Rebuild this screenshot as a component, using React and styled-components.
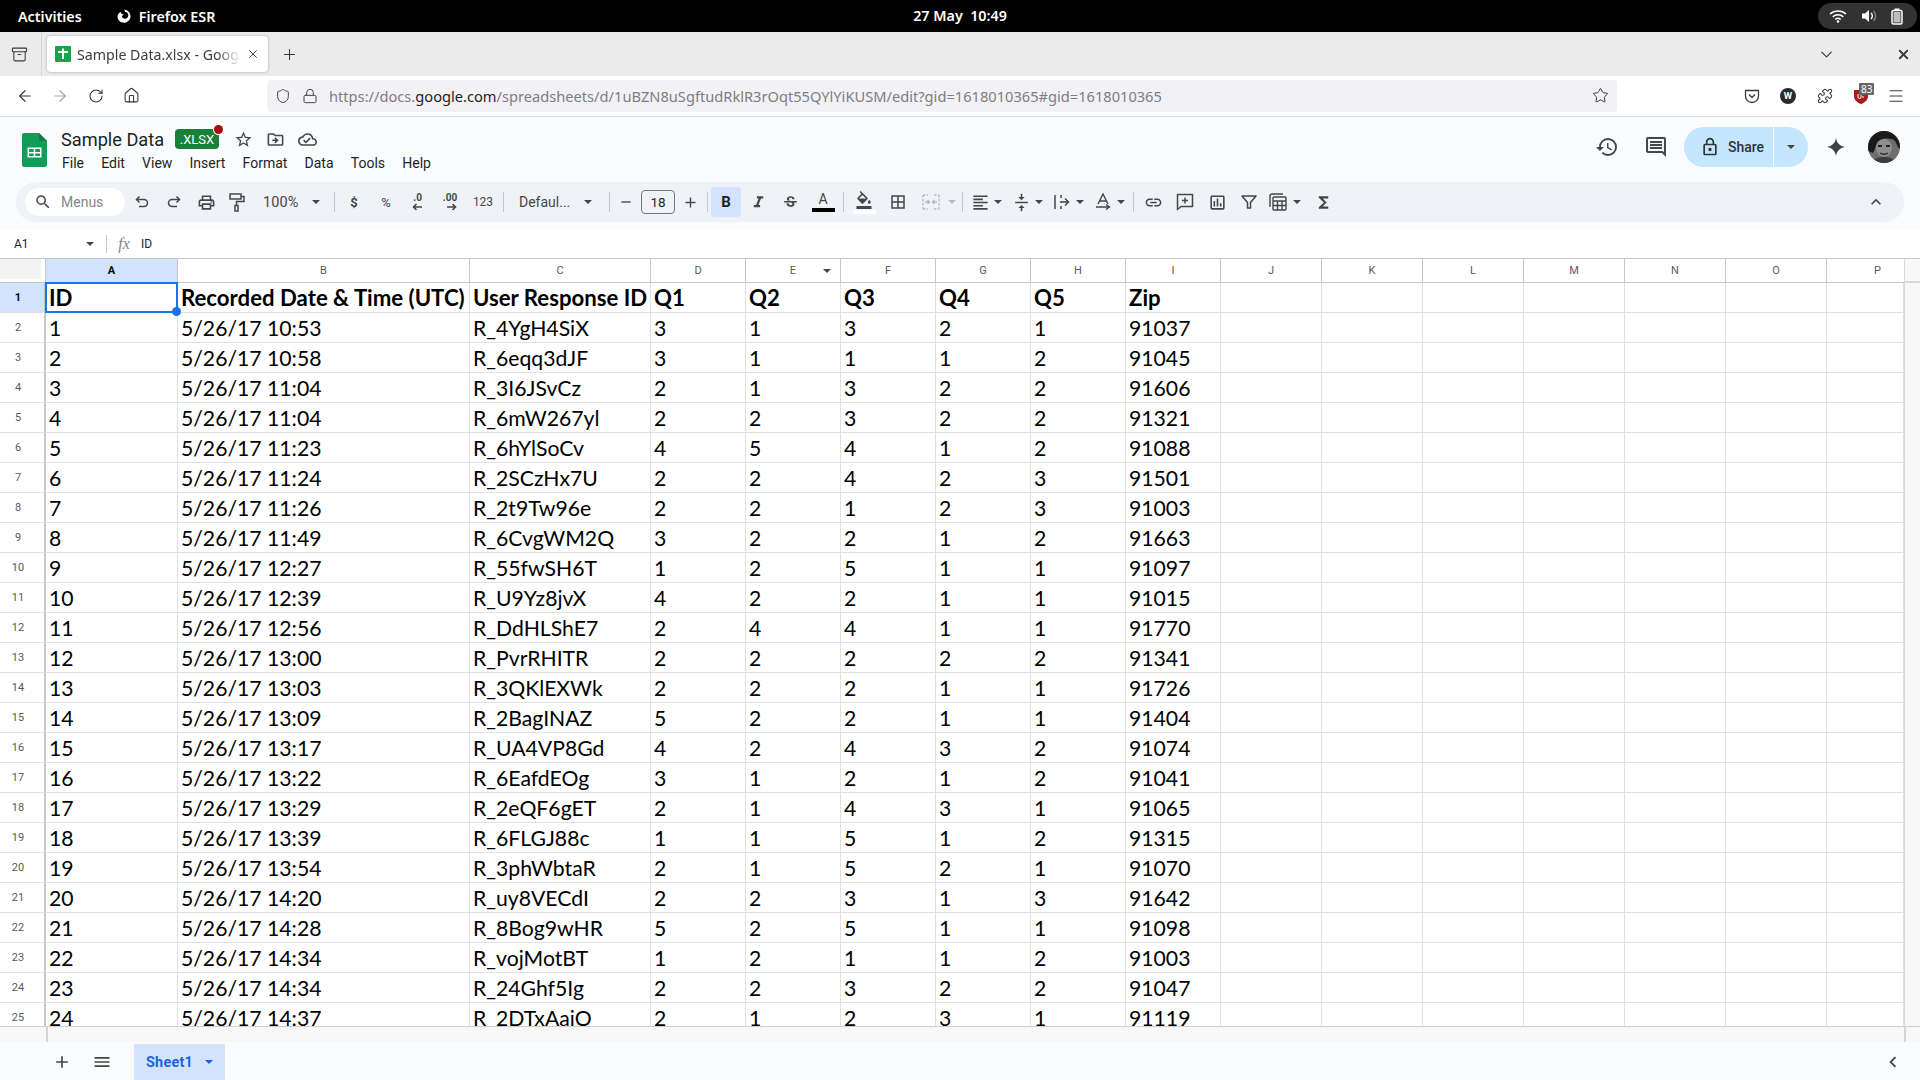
import React from "react";
import styled, { createGlobalStyle } from "styled-components";
import { ArrowLeft, ArrowRight, RotateCw, Home, Shield, Lock, Star, Plus, X, ChevronDown, Menu, Puzzle, Archive } from "lucide-react";
import {
  MdOutlinePrint, MdSearch, MdFormatItalic, MdStrikethroughS,
  MdOutlineFormatColorFill, MdBorderAll, MdFormatAlignLeft, MdVerticalAlignCenter, MdLink,
  MdOutlineInsertChart, MdFunctions, MdOutlineHistory, MdOutlineComment, MdOutlineLock, MdOutlineStarBorder,
  MdOutlineDriveFileMove, MdOutlineCloudDone, MdAdd, MdRemove, MdMenu, MdKeyboardArrowUp, MdChevronLeft,
} from "react-icons/md";

const Global = createGlobalStyle`
  html, body { margin: 0; padding: 0; height: 100%; overflow: hidden; background: #fff; }
  body { font-family: Roboto, "Liberation Sans", sans-serif; }
  * { box-sizing: border-box; }
`;

const Page = styled.div`
  width: 1920px; height: 1080px; display: flex; flex-direction: column; overflow: hidden;
`;

/* ---------- GNOME top bar ---------- */
const TopBar = styled.div`
  height: 32px; background: #000; color: #fff; display: flex; align-items: center; position: relative;
  font: 600 14.3px "Noto Sans", sans-serif; padding-left: 18px; flex: none;
`;
const AppMenu = styled.div`
  margin-left: 34px; display: flex; align-items: center; gap: 7px;
`;
const Clock = styled.div`
  position: absolute; left: 900px; top: 0; line-height: 32px; width: 120px; text-align: center; white-space: pre;
`;
const StatusPill = styled.div`
  margin-left: auto; margin-right: 3px; width: 99px; height: 26px; border-radius: 13px; background: #323232;
  display: flex; align-items: center; justify-content: space-between; padding: 0 14px 0 11px;
`;

/* ---------- Firefox chrome ---------- */
const TabBar = styled.div`
  height: 44px; background: #ebebeb; display: flex; align-items: center; flex: none; color: #3a3a3f;
`;
const ViewBtn = styled.div`
  width: 42px; height: 44px; display: flex; align-items: center; justify-content: center; border-right: 1px solid #d4d4d4; padding-right: 2px;
`;
const Tab = styled.div`
  margin-left: 5px; width: 221px; height: 36px; background: #fff; border-radius: 4px; box-shadow: 0 0 3px rgba(0,0,0,.3);
  display: flex; align-items: center; padding: 0 0 0 8px; gap: 6px; position: relative;
`;
const TabTitle = styled.div`
  font: 400 14.2px "Noto Sans", sans-serif; white-space: nowrap; overflow: hidden; width: 163px; flex: none; color: #3d3d42;
  -webkit-mask-image: linear-gradient(90deg, #000 86%, transparent 100%);
  mask-image: linear-gradient(90deg, #000 86%, transparent 100%);
`;
const NewTab = styled.div`
  margin-left: 13px; display: flex; align-items: center;
`;
const TabBarRight = styled.div`
  margin-left: auto; display: flex; align-items: center; gap: 60px; padding-right: 9px;
`;
const NavBar = styled.div`
  height: 41px; background: #fff; border-bottom: 1px solid #dcdcdc; display: flex; align-items: center; flex: none; color: #3a3a3f;
  padding-bottom: 1px;
`;
const NavCell = styled.div`
  width: ${p => p.$w}px; display: flex; align-items: center; justify-content: center; flex: none; color: ${p => p.$c || "inherit"}; position: relative;
  margin-left: ${p => p.$ml || 0}px;
`;
const UrlBar = styled.div`
  width: 1350px; height: 32px; background: #f2f2f4; border-radius: 4px; margin-left: 126px; display: flex; align-items: center; flex: none; position: relative;
  padding-left: 8px;
`;
const UrlText = styled.div`
  font: 400 14.65px "Noto Sans", sans-serif; color: #7d7d84; white-space: nowrap; flex: 1;
  b { font-weight: 400; color: #1f1f23; }
`;
const Badge83 = styled.span`
  position: absolute; top: -5px; left: 16px; background: #666; color: #fff; font: 400 10px "Noto Sans", sans-serif; padding: 0 2px; line-height: 12px; border-radius: 1px;
`;

/* ---------- Docs header ---------- */
const DocHeader = styled.div`
  height: 65px; background: #f9fbfd; flex: none; display: flex; align-items: flex-start; position: relative;
`;
const LogoWrap = styled.div`
  margin: 16px 0 0 22px; width: 25px; height: 34px; flex: none;
`;
const TitleCol = styled.div`
  margin-left: 14px; padding-top: 10px; display: flex; flex-direction: column;
`;
const TitleRow = styled.div`
  display: flex; align-items: center; height: 24px;
`;
const DocTitle = styled.div`
  font: 400 18.2px Roboto, sans-serif; color: #1f1f1f; width: 114px; white-space: nowrap;
`;
const XlsxBadge = styled.div`
  width: 44px; height: 20px; background: #188038; color: #fff; font: 400 13px Roboto, sans-serif;
  border-radius: 4px; display: flex; align-items: center; justify-content: center; position: relative;
`;
const RedDot = styled.span`
  position: absolute; right: -4px; top: -4px; width: 9px; height: 9px; border-radius: 50%; background: #a50e0e; box-shadow: 0 0 0 1px #f9fbfd;
`;
const TitleIcon = styled.div`
  width: 32px; display: flex; align-items: center; justify-content: center; color: #444746; margin-left: ${p => p.$ml || 0}px;
`;
const MenuRow = styled.div`
  display: flex; gap: 17.2px; font: 400 14px Roboto, sans-serif; color: #1f1f1f; margin: 3px 0 0 1px; line-height: 18px;
`;
const HeaderRight = styled.div`
  position: absolute; right: 0; top: 10px; height: 40px; display: flex; align-items: center;
`;
const HeadIcon = styled.div`
  width: ${p => p.$w}px; display: flex; justify-content: center; color: #444746; flex: none; margin-left: ${p => p.$ml || 0}px;
`;
const SharePill = styled.div`
  width: 124px; height: 40px; border-radius: 20px; background: #c2e7ff; display: flex; align-items: center; overflow: hidden; margin-left: 8px; color: #1f1f1f;
`;
const ShareMain = styled.div`
  width: 90px; height: 40px; display: flex; align-items: center; padding-left: 16px; gap: 8px; font: 500 14px Roboto, sans-serif; border-right: 1px solid #fff; color: #333;
`;
const ShareCaret = styled.div`
  flex: 1; display: flex; justify-content: center;
`;
const Caret = styled.span`
  display: inline-block; width: 0; height: 0; border-left: 4px solid transparent; border-right: 4px solid transparent;
  border-top: 4px solid ${p => p.$c || "#444746"}; flex: none;
`;
const AvatarWrap = styled.div`
  width: 32px; height: 32px; border-radius: 50%; overflow: hidden; margin: 0 20px 0 18px; flex: none;
`;

/* ---------- Toolbar ---------- */
const ToolbarZone = styled.div`
  height: 48px; background: #f9fbfd; padding: 0 16px 8px; flex: none;
`;
const Toolbar = styled.div`
  height: 40px; background: #eff3f8; border-radius: 20px; display: flex; align-items: center; padding: 0 12px 0 9px;
  color: #444746; font-family: Roboto, sans-serif;
`;
const SearchPill = styled.div`
  width: 100px; height: 28px; background: #fff; border-radius: 14px; display: flex; align-items: center; padding-left: 9px; gap: 9px;
  font-size: 14px; color: #80868b; flex: none;
`;
const Cell = styled.div`
  width: ${p => p.$w}px; height: 30px; flex: none; display: flex; align-items: center; justify-content: center;
  margin-left: ${p => p.$ml || 0}px; color: ${p => p.$c || "#444746"}; border-radius: 4px;
  background: ${p => p.$active ? "#d3e3fd" : "transparent"};
  font-size: ${p => p.$fs || 14}px; white-space: nowrap; position: relative;
`;
const Sep = styled.div`
  width: 1px; height: 20px; background: #c7c7c7; margin: 0 ${p => p.$r ?? 4}px 0 ${p => p.$l ?? 4}px; flex: none;
`;
const ZoomBtn = styled.div`
  width: 79px; height: 30px; display: flex; align-items: center; padding: 0 0 0 12px; font-size: 14.5px; letter-spacing: .1px; flex: none;
`;
const FontBtn = styled.div`
  width: 97px; height: 30px; display: flex; align-items: center; padding-left: 11px; font-size: 14px; flex: none;
`;
const BtnCaretGap = styled.span`
  margin-left: ${p => p.$m}px; display: inline-flex;
`;
const SizeBox = styled.div`
  width: 34px; height: 24px; border: 1px solid #747775; border-radius: 4px; margin: 0 3px; display: flex; align-items: center; justify-content: center;
  font-size: 13.5px; color: #1f1f1f; flex: none;
`;
const BoldMark = styled.span`
  font: 700 15px Roboto, sans-serif; color: #1f1f1f;
`;
const ColorA = styled.div`
  display: flex; flex-direction: column; align-items: center; width: 23px; font-size: 14px; line-height: 15px; color: #444746;
`;
const ColorBar = styled.div`
  width: 23px; height: 4px; background: ${p => p.$c}; margin-top: 1px;
`;
const FillStack = styled.div`
  display: flex; flex-direction: column; align-items: center; width: 23px;
`;
const DecMark = styled.div`
  display: flex; flex-direction: column; align-items: flex-end; font: 700 10px/10px Roboto, sans-serif;
`;
const Drop = styled.div`
  display: flex; align-items: center; flex: none; margin-left: ${p => p.$ml ?? 5}px; color: #444746;
`;
const DropIcon = styled.div`
  width: 26px; display: flex; justify-content: center;
`;
const DropCaret = styled.div`
  width: ${p => p.$w || 10}px; display: flex; justify-content: center;
`;
const CollapseBtn = styled.div`
  margin-left: auto; width: 32px; display: flex; justify-content: center; color: #444746;
`;

/* ---------- Formula bar ---------- */
const FormulaBar = styled.div`
  height: 28px; background: #fff; display: flex; align-items: center; flex: none; font: 400 12px Roboto, sans-serif; color: #1f1f1f;
`;
const NameBox = styled.div`
  width: 94px; padding-left: 14px; display: flex; align-items: center; justify-content: space-between;
`;
const FxSep = styled.div`
  width: 1px; height: 18px; background: #c7c7c7; margin-left: 12px;
`;
const Fx = styled.div`
  width: 34px; text-align: center; font: italic 400 16px "Liberation Serif", serif; color: #80868b;
`;

/* ---------- Grid ---------- */
const GridArea = styled.div`
  flex: 1; min-height: 0; display: flex; overflow: hidden; background: #fff;
`;
const Table = styled.div`
  width: 1904px; flex: none; display: grid; align-content: start;
  grid-template-columns: 46px 132px 292px 181px repeat(6, 95px) repeat(6, 101px) 77px;
  grid-auto-rows: 30px; grid-template-rows: 25px;
`;
const VScroll = styled.div`
  width: 16px; flex: none; background: #f8f8f8; border-left: 1px solid #dadada; border-top: 1px solid #c7c7c7;
  display: flex; flex-direction: column;
`;
const VScrollHead = styled.div`
  height: 24px; border-bottom: 2px solid #dadada; flex: none;
`;
const Corner = styled.div`
  background: #fff; border-top: 1px solid #c7c7c7; border-bottom: 1px solid #c7c7c7; border-right: 1px solid #c7c7c7;
`;
const CornerBlock = styled.div`
  width: 41px; height: 20px; background: #f3f3f3;
`;
const ColHead = styled.div`
  display: flex; align-items: center; justify-content: center; position: relative;
  border-top: 1px solid #c7c7c7; border-bottom: 1px solid #c7c7c7; border-right: ${p => p.$last ? 0 : 1}px solid #c7c7c7;
  background: ${p => p.$sel ? "#d3e3fd" : "#fff"}; font: ${p => p.$sel ? 700 : 400} 11px Roboto, sans-serif;
  color: ${p => p.$sel ? "#0b0b0b" : "#575a5a"}; padding-left: ${p => p.$last ? 24 : 0}px;
`;
const ColCaret = styled.span`
  position: absolute; right: 9px; top: 10px; display: flex;
`;
const RowHead = styled.div`
  display: flex; align-items: center; justify-content: center; padding-right: 8px;
  border-bottom: 1px solid #e1e1e1; border-right: 2px solid #c7c7c7;
  background: ${p => p.$sel ? "#d3e3fd" : "#fff"}; font: ${p => p.$sel ? 700 : 400} 11px Roboto, sans-serif;
  color: ${p => p.$sel ? "#0b0b0b" : "#575a5a"};
`;
const DataCell = styled.div`
  border-bottom: 1px solid #e1e1e1; border-right: 1px solid #e1e1e1; padding-left: 3px;
  font: ${p => p.$b ? 700 : 400} ${p => p.$b ? 22.2 : 21.2}px/30px Lato, "Liberation Sans", sans-serif; color: #000; white-space: nowrap; position: relative;
  z-index: ${p => p.$z || 0};
`;
const Selection = styled.div`
  position: absolute; left: -1px; top: -1px; right: -1px; bottom: -1px; border: 2px solid #1a73e8; pointer-events: none;
`;
const Handle = styled.span`
  position: absolute; right: -5px; bottom: -5px; width: 9px; height: 9px; background: #1a73e8; border-radius: 50%;
`;
const HScroll = styled.div`
  height: 16px; flex: none; background: #f8f8f8; border-top: 1px solid #cfcfcf; display: flex; justify-content: space-between;
`;
const HMark = styled.div`
  width: 2px; background: #d6d6d6; margin-left: ${p => p.$ml}px; margin-right: ${p => p.$mr}px;
`;
const BottomBar = styled.div`
  height: 38px; flex: none; background: #f9fbfd; display: flex; align-items: flex-end; color: #444746;
`;
const BottomIcon = styled.div`
  width: ${p => p.$w}px; height: 36px; display: flex; align-items: center; justify-content: center; margin-left: ${p => p.$ml || 0}px; flex: none;
`;
const SheetTab = styled.div`
  width: 91px; height: 36px; background: #d3e3fd; display: flex; align-items: center; padding-left: 12px; gap: 12px;
  font: 700 14.4px Roboto, sans-serif; letter-spacing: .25px; color: #1a66d8; margin-left: 12px; flex: none;
`;
const ScrollLeft = styled.div`
  margin-left: auto; margin-right: 16px; height: 36px; display: flex; align-items: center;
`;

/* ---------- Drawings ---------- */
const SheetsLogo = () => (
  <svg width="25" height="34" viewBox="0 0 25 34">
    <path d="M2 0h15l8 8v24a2 2 0 0 1-2 2H2a2 2 0 0 1-2-2V2a2 2 0 0 1 2-2z" fill="#0f9d58" />
    <path d="M17 0l8 8h-6a2 2 0 0 1-2-2z" fill="#0b7d45" />
    <path d="M5.5 14.5h14v10h-14z M7 16v3h4.7v-3z M13.3 16v3H18v-3z M7 20.5v2.5h4.7v-2.5z M13.3 20.5v2.5H18v-2.5z" fill="#fff" fillRule="evenodd" />
  </svg>
);
const Favicon = () => (
  <svg width="16" height="16" viewBox="0 0 16 16" style={{ flex: "none" }}>
    <rect width="16" height="16" rx="1" fill="#16a34a" />
    <path d="M3 5h4V2.500h2V5h4v2H9v6H7V7H3z" fill="#fff" />
  </svg>
);
const FirefoxMark = () => (
  <svg width="16" height="16" viewBox="0 0 16 16">
    <path d="M8 1.5c1 .8 1 1.5.8 2.5 2-.3 3.8 1.5 3.5 3.8-.2 1.8-2 3.2-3.8 2.9-1.6-.2-2.6-1.3-2.6-2.6L8 6.5C6 6.4 5 5.6 4.6 4 2.5 5.3 1.2 7 1.6 9.6 2.2 13 5 15 8.2 14.8c3.5-.2 6.3-3 6.3-6.6C14.500 4.700 11.700 1.900 8 1.500z" fill="#fff" />
  </svg>
);
const Wifi = () => (
  <svg width="18" height="14" viewBox="0 0 18 14" fill="none" stroke="#fff" strokeWidth="1.6">
    <path d="M1 5a12 12 0 0 1 16 0" /><path d="M3.700 7.800a8 8 0 0 1 10.600 0" /><path d="M6.300 10.500a4 4 0 0 1 5.400 0" />
    <circle cx="9" cy="12.500" r="1.300" fill="#fff" stroke="none" />
  </svg>
);
const Speaker = () => (
  <svg width="16" height="14" viewBox="0 0 16 14">
    <path d="M1 4.500h3L8 1v12L4 9.500H1z" fill="#fff" />
    <path d="M10 4a4 4 0 0 1 0 6" stroke="#fff" strokeWidth="1.400" fill="none" />
    <path d="M12.500 2a7 7 0 0 1 0 10" stroke="#888" strokeWidth="1.300" fill="none" />
  </svg>
);
const Battery = () => (
  <svg width="12" height="17" viewBox="0 0 12 17" fill="none">
    <rect x="1" y="2.500" width="10" height="13.500" rx="1.500" stroke="#fff" strokeWidth="1.500" />
    <rect x="3.500" y="0.500" width="5" height="2" fill="#fff" />
    <rect x="2.500" y="4" width="7" height="10.500" fill="#bdbdbd" />
  </svg>
);
const Pocket = () => (
  <svg width="16" height="16" viewBox="0 0 16 16" fill="none" stroke="#3a3a3f" strokeWidth="1.300">
    <path d="M1.500 2.500h13v5.500a6.500 6.500 0 0 1-13 0z" strokeLinejoin="round" /><path d="M5 6.500l3 3 3-3" />
  </svg>
);
const WBadge = () => (
  <svg width="16" height="16" viewBox="0 0 16 16">
    <circle cx="8" cy="8" r="8" fill="#2b2b2e" />
    <text x="8" y="11.300" textAnchor="middle" fontSize="9.500" fontWeight="700" fill="#fff" fontFamily="Roboto">W</text>
  </svg>
);
const UBlock = () => (
  <svg width="14" height="16" viewBox="0 0 14 16">
    <path d="M0 2h14v6c0 4-3 6.500-7 8-4-1.500-7-4-7-8z" fill="#a61c1c" />
    <path d="M4 6v3a1.500 1.500 0 0 0 3 0V6m1 3h2" stroke="#fff" strokeWidth="1" fill="none" />
  </svg>
);
const Sparkle = () => (
  <svg width="18" height="18" viewBox="0 0 18 18">
    <path d="M9 0c.8 5 3.800 8.200 9 9-5.200.8-8.200 4-9 9-.8-5-3.800-8.200-9-9 5.200-.8 8.200-4 9-9z" fill="#3f4245" />
  </svg>
);
const Avatar = () => (
  <svg width="32" height="32" viewBox="0 0 32 32">
    <rect width="32" height="32" fill="#6d6d6d" />
    <path d="M0 0h32v17c-2 1-3-4-5-7-4-3-10-3-15-1-3 1-4 5-5 9l-2 4-5-2z" fill="#1a1a1a" />
    <ellipse cx="16" cy="17" rx="8" ry="9" fill="#8e8e8e" />
    <path d="M10 15h4M18 15h4" stroke="#222" strokeWidth="2" />
    <path d="M12 22c2 1.500 6 1.500 8 0" stroke="#2a2a2a" strokeWidth="1.500" fill="none" />
    <path d="M4 32c1-4 6-6 12-6s11 2 12 6z" fill="#3c3c3c" />
  </svg>
);
const UndoIcon = ({ flip }) => (
  <svg width="16" height="16" viewBox="0 0 16 16" fill="none" stroke="currentColor" strokeWidth="1.500" style={flip ? { transform: "scaleX(-1)" } : undefined}>
    <path d="M5.500 2.500L2.500 5.500l3 3" /><path d="M2.500 5.500h7.500a3.500 3.500 0 0 1 0 7H5" />
  </svg>
);
const PaintIcon = () => (
  <svg width="16" height="19" viewBox="0 0 16 19" fill="none" stroke="currentColor" strokeWidth="1.500">
    <rect x="1" y="1" width="11" height="5" /><path d="M12 3.500h3v5H7.500v4" /><rect x="6" y="12.500" width="3" height="5.500" />
  </svg>
);
const AddCommentIcon = () => (
  <svg width="18" height="18" viewBox="0 0 18 18" fill="none" stroke="currentColor" strokeWidth="1.500">
    <path d="M1.500 1.500h15v12H5l-3.500 3z" strokeLinejoin="round" /><path d="M9 4.500v6M6 7.500h6" />
  </svg>
);
const DecArrow = ({ left }) => (
  <svg width="10" height="8" viewBox="0 0 10 8" fill="none" stroke="currentColor" strokeWidth="1.600">
    {left ? <path d="M10 4H2M4.500 1L1.500 4l3 3" /> : <path d="M0 4h8M5.500 1l3 3-3 3" />}
  </svg>
);
const MergeIcon = () => (
  <svg width="18" height="18" viewBox="0 0 18 18" fill="none" stroke="#b9bcbf" strokeWidth="1.400" strokeDasharray="2.500 1.500">
    <path d="M1 2h5M12 2h5M1 16h5M12 16h5M1 2v14M17 2v14" />
    <path d="M3 9h4M15 9h-4M5.500 7l2 2-2 2M12.500 7l-2 2 2 2" strokeDasharray="none" />
  </svg>
);
const WrapIcon = () => (
  <svg width="18" height="18" viewBox="0 0 18 18" fill="none" stroke="currentColor" strokeWidth="1.500">
    <path d="M2 2v14" /><path d="M8 2v3M8 8v2M8 13v3" /><path d="M8 9h7M12 5.500L15.500 9 12 12.500" />
  </svg>
);
const RotateIcon = () => (
  <svg width="20" height="20" viewBox="0 0 20 20" fill="none" stroke="currentColor" strokeWidth="1.400">
    <path d="M5 12l5-10 5 10M6.700 9h6.600" /><path d="M3 15h13M13 12.500l3.500 2.500-3.500 2.500" />
  </svg>
);
const FilterIcon = () => (
  <svg width="16" height="16" viewBox="0 0 16 16" fill="none" stroke="currentColor" strokeWidth="1.500">
    <path d="M1 2h14L9.500 8.500V14h-3V8.500z" strokeLinejoin="round" />
  </svg>
);
const TableIcon = () => (
  <svg width="18" height="18" viewBox="0 0 18 18" fill="none" stroke="currentColor" strokeWidth="1.400">
    <path d="M1 14V3a2 2 0 0 1 2-2h11" />
    <rect x="4" y="4" width="13" height="13" rx="1" /><path d="M4 8h13M4 12.500h13M8.500 8v9M13 8v9" />
  </svg>
);

/* ---------- Data ---------- */
const columns = ["A","B","C","D","E","F","G","H","I","J","K","L","M","N","O","P"];
const header = ["ID","Recorded Date & Time (UTC)","User Response ID","Q1","Q2","Q3","Q4","Q5","Zip"];
const raw = `10:53 R_4YgH4SiX 3 1 3 2 1 91037
10:58 R_6eqq3dJF 3 1 1 1 2 91045
11:04 R_3I6JSvCz 2 1 3 2 2 91606
11:04 R_6mW267yl 2 2 3 2 2 91321
11:23 R_6hYlSoCv 4 5 4 1 2 91088
11:24 R_2SCzHx7U 2 2 4 2 3 91501
11:26 R_2t9Tw96e 2 2 1 2 3 91003
11:49 R_6CvgWM2Q 3 2 2 1 2 91663
12:27 R_55fwSH6T 1 2 5 1 1 91097
12:39 R_U9Yz8jvX 4 2 2 1 1 91015
12:56 R_DdHLShE7 2 4 4 1 1 91770
13:00 R_PvrRHITR 2 2 2 2 2 91341
13:03 R_3QKlEXWk 2 2 2 1 1 91726
13:09 R_2BagINAZ 5 2 2 1 1 91404
13:17 R_UA4VP8Gd 4 2 4 3 2 91074
13:22 R_6EafdEOg 3 1 2 1 2 91041
13:29 R_2eQF6gET 2 1 4 3 1 91065
13:39 R_6FLGJ88c 1 1 5 1 2 91315
13:54 R_3phWbtaR 2 1 5 2 1 91070
14:20 R_uy8VECdI 2 2 3 1 3 91642
14:28 R_8Bog9wHR 5 2 5 1 1 91098
14:34 R_vojMotBT 1 2 1 1 2 91003
14:34 R_24Ghf5Ig 2 2 3 2 2 91047
14:37 R_2DTxAaiO 2 1 2 3 1 91119`;
const rows = raw.split("\n").map((l, i) => {
  const p = l.split(" ");
  return [String(i + 1), "5/26/17 " + p[0], ...p.slice(1)];
});

const Grid = () => (
  <Table>
    <Corner><CornerBlock /></Corner>
    {columns.map((c) => (
      <ColHead key={c} $sel={c === "A"} $last={c === "P"}>
        {c}
        {c === "E" && <ColCaret><Caret /></ColCaret>}
      </ColHead>
    ))}
    <RowHead $sel>1</RowHead>
    {columns.map((c, i) => (
      <DataCell key={c} $b $z={i === 0 ? 2 : 0}>
        {header[i] || ""}
        {i === 0 && <Selection><Handle /></Selection>}
      </DataCell>
    ))}
    {rows.map((r, ri) => (
      <React.Fragment key={ri}>
        <RowHead>{ri + 2}</RowHead>
        {columns.map((c, i) => <DataCell key={c}>{r[i] || ""}</DataCell>)}
      </React.Fragment>
    ))}
  </Table>
);

export default function App() {
  return (
    <Page>
      <Global />
      <TopBar>
        Activities
        <AppMenu><FirefoxMark />Firefox ESR</AppMenu>
        <Clock>{"27 May  10:49"}</Clock>
        <StatusPill><Wifi /><Speaker /><Battery /></StatusPill>
      </TopBar>

      <TabBar>
        <ViewBtn><Archive size={17} strokeWidth={1.5} /></ViewBtn>
        <Tab>
          <Favicon />
          <TabTitle>Sample Data.xlsx - Google Sheets</TabTitle>
          <X size={14} strokeWidth={1.5} style={{ flex: "none" }} />
        </Tab>
        <NewTab><Plus size={17} strokeWidth={1.5} /></NewTab>
        <TabBarRight>
          <ChevronDown size={19} strokeWidth={1.5} />
          <X size={15} strokeWidth={3} />
        </TabBarRight>
      </TabBar>

      <NavBar>
        <NavCell $w={49}><ArrowLeft size={18} strokeWidth={1.6} /></NavCell>
        <NavCell $w={22} $c="#a9a9ad"><ArrowRight size={18} strokeWidth={1.6} /></NavCell>
        <NavCell $w={50}><RotateCw size={16} strokeWidth={1.6} /></NavCell>
        <NavCell $w={20}><Home size={17} strokeWidth={1.5} /></NavCell>
        <UrlBar>
          <Shield size={16} strokeWidth={1.5} color="#444" />
          <NavCell $w={38} $c="#444"><Lock size={16} strokeWidth={1.5} /></NavCell>
          <UrlText>https://docs.<b>google.com</b>/spreadsheets/d/1uBZN8uSgftudRklR3rOqt55QYlYiKUSM/edit?gid=1618010365#gid=1618010365</UrlText>
          <NavCell $w={34}><Star size={17} strokeWidth={1.4} /></NavCell>
        </UrlBar>
        <NavCell $w={36} $ml={117}><Pocket /></NavCell>
        <NavCell $w={36}><WBadge /></NavCell>
        <NavCell $w={37}><Puzzle size={16} strokeWidth={1.6} /></NavCell>
        <NavCell $w={35}><UBlock /><Badge83>83</Badge83></NavCell>
        <NavCell $w={36}><Menu size={18} strokeWidth={1.5} /></NavCell>
      </NavBar>

      <DocHeader>
        <LogoWrap><SheetsLogo /></LogoWrap>
        <TitleCol>
          <TitleRow>
            <DocTitle>Sample Data</DocTitle>
            <XlsxBadge>.XLSX<RedDot /></XlsxBadge>
            <TitleIcon $ml={8}><MdOutlineStarBorder size={19} /></TitleIcon>
            <TitleIcon><MdOutlineDriveFileMove size={19} /></TitleIcon>
            <TitleIcon><MdOutlineCloudDone size={19} /></TitleIcon>
          </TitleRow>
          <MenuRow>
            <span>File</span><span>Edit</span><span>View</span><span>Insert</span><span>Format</span><span>Data</span><span>Tools</span><span>Help</span>
          </MenuRow>
        </TitleCol>
        <HeaderRight>
          <HeadIcon $w={40}><MdOutlineHistory size={24} /></HeadIcon>
          <HeadIcon $w={40} $ml={9}><MdOutlineComment size={24} /></HeadIcon>
          <SharePill>
            <ShareMain><MdOutlineLock size={20} />Share</ShareMain>
            <ShareCaret><Caret /></ShareCaret>
          </SharePill>
          <HeadIcon $w={28} $ml={14}><Sparkle /></HeadIcon>
          <AvatarWrap><Avatar /></AvatarWrap>
        </HeaderRight>
      </DocHeader>

      <ToolbarZone>
        <Toolbar>
          <SearchPill><MdSearch size={18} color="#444746" />Menus</SearchPill>
          <Cell $w={34}><UndoIcon /></Cell>
          <Cell $w={30}><UndoIcon flip /></Cell>
          <Cell $w={34}><MdOutlinePrint size={19} /></Cell>
          <Cell $w={28}><PaintIcon /></Cell>
          <ZoomBtn>100%<BtnCaretGap $m={14}><Caret /></BtnCaretGap></ZoomBtn>
          <Sep />
          <Cell $w={30} $fs={13}><b>$</b></Cell>
          <Cell $w={34} $fs={13}>%</Cell>
          <Cell $w={28}><DecMark>.0<DecArrow left /></DecMark></Cell>
          <Cell $w={38}><DecMark>.00<DecArrow /></DecMark></Cell>
          <Cell $w={28} $fs={12}>123</Cell>
          <Sep $l={6} />
          <FontBtn>Defaul...<BtnCaretGap $m={14}><Caret /></BtnCaretGap></FontBtn>
          <Sep />
          <Cell $w={24}><MdRemove size={16} /></Cell>
          <SizeBox>18</SizeBox>
          <Cell $w={24}><MdAdd size={17} /></Cell>
          <Sep $l={5} $r={3} />
          <Cell $w={30} $active><BoldMark>B</BoldMark></Cell>
          <Cell $w={34}><MdFormatItalic size={19} /></Cell>
          <Cell $w={30}><MdStrikethroughS size={17} /></Cell>
          <Cell $w={36}><ColorA>A<ColorBar $c="#000" /></ColorA></Cell>
          <Sep $l={2} $r={3} />
          <Cell $w={34}><FillStack><MdOutlineFormatColorFill size={18} /><ColorBar $c="#fff" /></FillStack></Cell>
          <Cell $w={34}><MdBorderAll size={18} /></Cell>
          <Cell $w={32}><MergeIcon /></Cell>
          <Cell $w={10}><Caret $c="#b9bcbf" /></Cell>
          <Sep $l={5} />
          <Drop $ml={0}><DropIcon><MdFormatAlignLeft size={19} /></DropIcon><DropCaret><Caret /></DropCaret></Drop>
          <Drop><DropIcon><MdVerticalAlignCenter size={19} /></DropIcon><DropCaret><Caret /></DropCaret></Drop>
          <Drop><DropIcon><WrapIcon /></DropIcon><DropCaret><Caret /></DropCaret></Drop>
          <Drop><DropIcon><RotateIcon /></DropIcon><DropCaret><Caret /></DropCaret></Drop>
          <Sep $l={7} $r={3} />
          <Cell $w={32}><MdLink size={19} /></Cell>
          <Cell $w={32}><AddCommentIcon /></Cell>
          <Cell $w={32}><MdOutlineInsertChart size={19} /></Cell>
          <Cell $w={32}><FilterIcon /></Cell>
          <Drop $ml={0}><DropIcon><TableIcon /></DropIcon><DropCaret $w={12}><Caret /></DropCaret></Drop>
          <Cell $w={40}><MdFunctions size={19} /></Cell>
          <CollapseBtn><MdKeyboardArrowUp size={20} /></CollapseBtn>
        </Toolbar>
      </ToolbarZone>

      <FormulaBar>
        <NameBox>A1<Caret /></NameBox>
        <FxSep />
        <Fx>fx</Fx>
        ID
      </FormulaBar>

      <GridArea>
        <Grid />
        <VScroll><VScrollHead /></VScroll>
      </GridArea>
      <HScroll><HMark $ml={46} $mr={0} /><HMark $ml={0} $mr={14} /></HScroll>
      <BottomBar>
        <BottomIcon $w={40} $ml={42}><MdAdd size={20} /></BottomIcon>
        <BottomIcon $w={40} ><MdMenu size={20} /></BottomIcon>
        <SheetTab>Sheet1<Caret $c="#1a66d8" /></SheetTab>
        <ScrollLeft><MdChevronLeft size={22} /></ScrollLeft>
      </BottomBar>
    </Page>
  );
}
